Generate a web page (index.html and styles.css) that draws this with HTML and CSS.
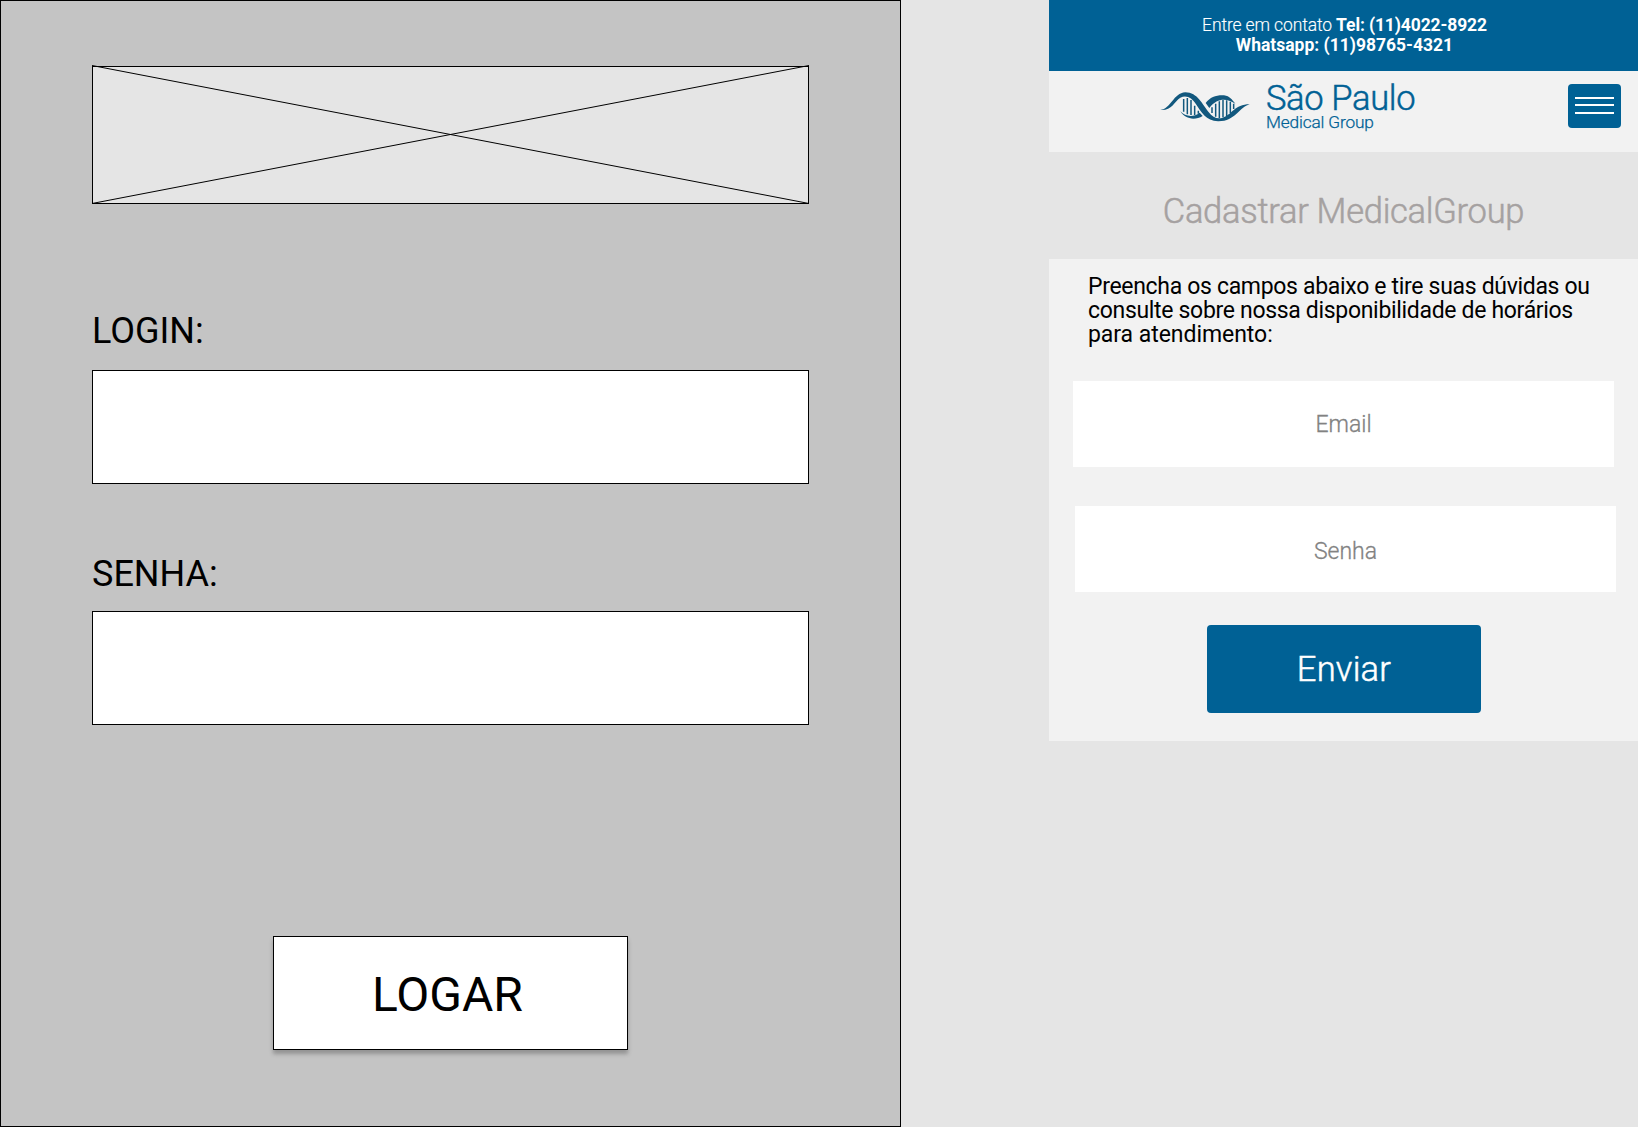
FILE: index.html
```html
<!DOCTYPE html>
<html lang="pt-BR">
<head>
<meta charset="utf-8">
<title>São Paulo Medical Group</title>
<link rel="stylesheet" href="styles.css">
</head>
<body>
<main class="board">
  <section class="wireframe">
    <svg class="image-slot" viewBox="0 0 717 138" width="717" height="138">
      <rect x="0.5" y="0.5" width="716" height="137"/>
      <path d="M0 -0.5L717 137.5M0 137.5L717 -0.5"/>
    </svg>
    <div class="wire-label first">LOGIN:</div>
    <div class="wire-input"></div>
    <div class="wire-label">SENHA:</div>
    <div class="wire-input"></div>
    <div class="wire-button"><span>LOGAR</span></div>
  </section>

  <section class="phone">
    <div class="contact">
      <p class="tel"><span>Entre em contato </span><b>Tel: (11)4022-8922</b></p>
      <p class="whats"><b>Whatsapp: (11)98765-4321</b></p>
    </div>
    <header class="header">
      <svg class="dna" viewBox="12 16 270 96" width="90" height="32">
        <path d="M13 73C45 70 52 22 88 20C125 20 140 58 157 78C170 94 182 101 198 97C228 88 235 56 281 56C250 64 238 108 186 107C150 107 135 78 120 56C108 37 92 27 73 36C55 48 46 76 13 73Z"/>
        <path d="M73 77C88 93 112 96 131 81L140 91C118 104 88 102 73 77Z"/>
        <path d="M149 52C163 34 180 28 204 29C222 31 227 42 238 54C218 42 188 31 160 67Z"/>
        <path class="rungs" d="M83 40V78M94 37V86M105 43V88M116 60V88M127 75V84M168 65V82M179 54V93M190 47V97M201 43V95M212 44V91M223 48V82M233 54V70"/>
      </svg>
      <div class="brand">
        <span class="brand-name">São Paulo</span>
        <span class="brand-sub">Medical Group</span>
      </div>
      <div class="menu"><i></i><i></i><i></i></div>
    </header>
    <h1 class="title">Cadastrar MedicalGroup</h1>
    <div class="panel">
      <p class="intro">Preencha os campos abaixo e tire suas dúvidas ou<br>consulte sobre nossa disponibilidade de horários<br><span>para atendimento:</span></p>
      <div class="field">Email</div>
      <div class="field senha">Senha</div>
      <div class="send">Enviar</div>
    </div>
  </section>
</main>
</body>
</html>
```
FILE: styles.css
```css
* { box-sizing: border-box; }
body { margin: 0; background: #e5e5e5; font-family: Roboto, "Liberation Sans", sans-serif; color: #000; }
.board { display: flex; justify-content: space-between; height: 1127px; overflow: hidden; }

.wireframe { width: 901px; height: 1127px; border: 1px solid #000; background: #c4c4c4; padding: 65px 91px 0; }
.image-slot { display: block; overflow: visible; fill: #e5e5e5; stroke: #000; stroke-width: 1; }
.wire-label { height: 42px; margin: 69px 0 16px; line-height: 42px; font-size: 36px; white-space: nowrap; }
.wire-label.first { margin: 106px 0 18px; }
.wire-input { width: 717px; height: 114px; border: 1px solid #000; background: #fff; }
.wire-button { width: 355px; height: 114px; margin: 211px 0 0 181px; padding: 30px 0 0 98px; border: 1px solid #000; background: #fff; box-shadow: 0 4px 4px rgba(0, 0, 0, .25); font-size: 48px; line-height: 56px; }

.phone { width: 589px; }
.contact { height: 71px; padding-top: 15px; background: #006195; color: #fff; font-size: 17.5px; line-height: 20px; text-align: center; white-space: nowrap; }
.contact p { margin: 0; padding-left: 2px; }
.contact .tel { letter-spacing: -.12px; }
.contact span { font-weight: 300; -webkit-text-stroke: .15px; }
.contact b { font-weight: 700; }
.header { display: flex; height: 81px; padding: 13px 17px 0 110px; background: #f2f2f2; }
.dna { margin: 7px 0 0 1px; fill: #12587e; }
.rungs { fill: none; stroke: #12587e; stroke-width: 4.5; }
.brand { display: flex; flex-direction: column; margin-left: 16px; color: #006195; font-weight: 300; white-space: nowrap; }
.brand-name { height: 28px; font-size: 34.5px; line-height: 28px; letter-spacing: -.35px; -webkit-text-stroke: .5px; }
.brand-sub { height: 20px; font-size: 17.25px; line-height: 20px; letter-spacing: -.15px; -webkit-text-stroke: .25px; }
.menu { width: 53px; height: 44px; margin-left: auto; padding: 13px 7px 0; border-radius: 4px; background: #006195; }
.menu i { display: block; width: 39px; height: 2px; margin-bottom: 5px; background: #fff; }
.menu i:nth-child(2) { margin-bottom: 6px; }
.title { height: 107px; margin: 0; padding-top: 31px; text-align: center; font-size: 34.5px; line-height: 56px; font-weight: 300; -webkit-text-stroke: .5px; letter-spacing: -.28px; color: #a5a1a1; }
.panel { height: 482px; padding: 16px 0 0 24px; background: #f2f2f2; }
.intro { height: 72px; margin: 0 0 34px 15px; font-size: 23px; line-height: 24px; letter-spacing: -.32px; white-space: nowrap; }
.intro span { letter-spacing: -.05px; }
.field { width: 541px; height: 86px; background: #fff; color: #828282; font-size: 23px; line-height: 88px; font-weight: 300; -webkit-text-stroke: .3px; text-align: center; }
.senha { margin: 39px 0 33px 2px; line-height: 92px; }
.send { width: 274px; height: 88px; margin-left: 134px; border-radius: 4px; background: #006195; color: #fff; font-size: 34.5px; line-height: 88px; letter-spacing: .2px; font-weight: 300; -webkit-text-stroke: .5px; text-align: center; }
```
